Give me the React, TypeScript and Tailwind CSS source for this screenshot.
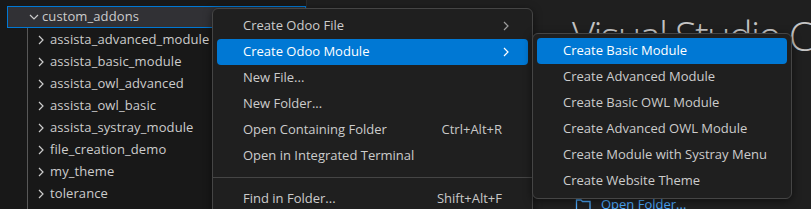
import { ReactNode } from "react";

const font = { fontFamily: '"Open Sans", "Noto Sans", sans-serif' };

function Chevron({ down = false, className = "" }: { down?: boolean; className?: string }) {
  return (
    <svg width="16" height="16" viewBox="0 0 16 16" className={className}>
      <path
        d={down ? "M4 6 L8 10 L12 6" : "M6 4 L10 8 L6 12"}
        fill="none"
        stroke="currentColor"
        strokeWidth="1.2"
      />
    </svg>
  );
}

const folders = [
  "assista_advanced_module",
  "assista_basic_module",
  "assista_owl_advanced",
  "assista_owl_basic",
  "assista_systray_module",
  "file_creation_demo",
  "my_theme",
  "tolerance",
];

function MenuItem({
  label,
  shortcut,
  active,
  sub,
}: {
  label: string;
  shortcut?: string;
  active?: boolean;
  sub?: boolean;
}) {
  return (
    <div
      className={`mx-[4px] h-[26px] rounded-[4px] flex items-center pl-[26px] pr-[14px] text-[13px] ${
        active ? "bg-[#0078d4] text-white" : "text-[#cccccc]"
      }`}
    >
      <span className="flex-1 whitespace-nowrap">{label}</span>
      {shortcut && <span className="pr-[12px] text-[#c8c8c8]">{shortcut}</span>}
      {sub && <Chevron className={active ? "text-white" : "text-[#9d9d9d]"} />}
    </div>
  );
}

function Sep(): ReactNode {
  return <div className="my-[8px] h-px bg-[#454545]" />;
}

export default function App() {
  return (
    <div className="relative w-[811px] h-[209px] overflow-hidden flex bg-[#1f1f1f]" style={font}>
      {/* sidebar */}
      <div className="w-[307px] shrink-0 bg-[#181818] pt-[6px] border-r border-[#2b2b2b]">
        <div className="ml-[7px] h-[22px] flex items-center bg-[#313135] border border-[#0078d4] text-[#cccccc] text-[13px] tracking-[0.1px]">
          <Chevron down className="ml-[18px] text-[#cccccc]" />
          <span>custom_addons</span>
        </div>
        <div className="ml-[27px] pt-px border-l border-[#585858] pb-[4px]">
          {folders.map((f) => (
            <div key={f} className="h-[22px] flex items-center text-[13px] tracking-[0.1px] text-[#cccccc]">
              <Chevron className="ml-[5px] text-[#cccccc]" />
              <span className="ml-[1px]">{f}</span>
            </div>
          ))}
        </div>
      </div>
      {/* editor welcome */}
      <div className="flex-1 relative">
        <div className="absolute left-[265px] top-[16px] text-[40px] font-light tracking-[-1.7px] leading-none text-[#c4c4c4] whitespace-nowrap">
          Visual Studio Code
        </div>
        <div className="absolute left-[268px] top-[195px] flex items-center gap-[8px] text-[13px] text-[#4daafc]">
          <svg width="18" height="16" viewBox="0 0 18 16">
            <path d="M1.5 3 H6 L7.5 4.5 H15 V13.5 H1.5 Z" fill="none" stroke="#4daafc" strokeWidth="1.3" />
          </svg>
          <span>Open Folder...</span>
        </div>
      </div>

      {/* context menu */}
      <div className="absolute left-[212px] top-[8px] w-[321px] h-[220px] bg-[#1f1f1f] border border-[#454545] rounded-[6px] pt-[4px] shadow-[0_2px_8px_rgba(0,0,0,0.5)]">
        <MenuItem label="Create Odoo File" sub />
        <MenuItem label="Create Odoo Module" sub active />
        <MenuItem label="New File..." />
        <MenuItem label="New Folder..." />
        <MenuItem label="Open Containing Folder" shortcut="Ctrl+Alt+R" />
        <MenuItem label="Open in Integrated Terminal" />
        <Sep />
        <MenuItem label="Find in Folder..." shortcut="Shift+Alt+F" />
      </div>

      {/* submenu */}
      <div className="absolute left-[532px] top-[33px] w-[260px] bg-[#1f1f1f] border border-[#454545] rounded-[6px] py-[4px] shadow-[0_2px_8px_rgba(0,0,0,0.5)]">
        <MenuItem label="Create Basic Module" active />
        <MenuItem label="Create Advanced Module" />
        <MenuItem label="Create Basic OWL Module" />
        <MenuItem label="Create Advanced OWL Module" />
        <MenuItem label="Create Module with Systray Menu" />
        <MenuItem label="Create Website Theme" />
      </div>
    </div>
  );
}
